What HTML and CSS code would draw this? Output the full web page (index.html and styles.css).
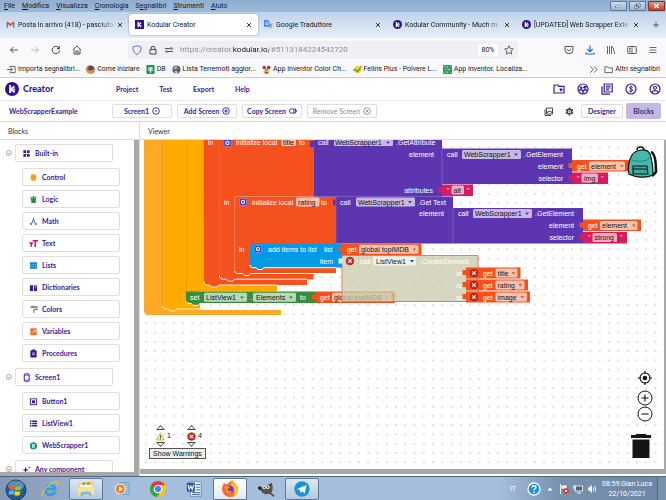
FILE: index.html
```html
<!DOCTYPE html>
<html lang="it">
<head>
<meta charset="utf-8">
<title>Kodular Creator</title>
<link rel="stylesheet" href="styles.css">
</head>
<body>
<svg class="defs" aria-hidden="true">
  <defs>
    <symbol id="kod" viewBox="0 0 14 14"><circle cx="7" cy="7" r="7" fill="#320f91"/><path d="M5.2 3v8M9.4 4.6 6 7.2l3.6 3.2" fill="none" stroke="#fff" stroke-width="1.9"/><circle cx="9.3" cy="7.4" r="1" fill="#fff"/></symbol>
    <symbol id="x" viewBox="0 0 6 6"><path d="m1 1 4 4M5 1 1 5" stroke="#222" stroke-width=".9"/></symbol>
    <symbol id="gear" viewBox="0 0 8 8"><rect x=".4" y=".4" width="7.2" height="7.2" rx="1.6" fill="#2b2fd0" stroke="#c5c0f5" stroke-width=".5"/><circle cx="4" cy="4" r="1.5" fill="none" stroke="#fff" stroke-width="1.1"/><path d="M4 1.4v5.2M1.7 2.7l4.6 2.6M6.3 2.7 1.7 5.3" stroke="#fff" stroke-width=".6"/><circle cx="4" cy="4" r=".9" fill="#2b2fd0"/></symbol>
    <symbol id="err" viewBox="0 0 10 10"><circle cx="5" cy="5" r="4.3" fill="#d3261c" stroke="#7d1a10" stroke-width=".6"/><path d="m3.1 3.1 3.8 3.8m0-3.8L3.1 6.9" stroke="#fff" stroke-width="1.3"/></symbol>
    <pattern id="dots" x="145" y="146.4" width="9.26" height="9.26" patternUnits="userSpaceOnUse"><path d="M0 1h2M1 0v2" stroke="#cfcfcf" stroke-width=".8"/></pattern>
    <pattern id="hatch" width="3" height="3" patternUnits="userSpaceOnUse"><path d="M0 0l3 3M3 0 0 3" stroke="#c8c890" stroke-width=".6"/></pattern>
  </defs>
</svg>

<nav class="menubar">
  <a href="#"><u>F</u>ile</a><a href="#"><u>M</u>odifica</a><a href="#"><u>V</u>isualizza</a><a href="#"><u>C</u>ronologia</a><a href="#">S<u>e</u>gnalibri</a><a href="#"><u>S</u>trumenti</a><a href="#"><u>A</u>iuto</a>
  <div class="winbtns">
    <button aria-label="Riduci"><svg viewBox="0 0 17 9"><rect x="5" y="4.500" width="7" height="2" fill="#fff" stroke="#445" stroke-width=".5"/></svg></button>
    <button aria-label="Ripristina"><svg viewBox="0 0 17 9"><path d="M7.500 2h4v3.500h-4zM5.500 3.700h4V7h-4z" fill="#fff" stroke="#445" stroke-width=".8"/></svg></button>
    <button class="close" aria-label="Chiudi"><svg viewBox="0 0 17 9"><path d="m6 2.200 5 4.600m0-4.600L6 6.800" stroke="#fff" stroke-width="1.700"/></svg></button>
  </div>
</nav>

<div class="tabs">
  <a class="tab" href="#"><svg class="fav" viewBox="0 0 10 10"><path d="M1.500 8.500V3" stroke="#4285f4" stroke-width="1.700"/><path d="M8.500 8.500V3" stroke="#34a853" stroke-width="1.700"/><path d="M1.200 2.400 5 5.400l3.800-3" fill="none" stroke="#ea4335" stroke-width="1.800"/></svg><span class="fade">Posta in arrivo (418) - pasciuto7</span><svg class="tx"><use href="#x"/></svg></a>
  <a class="tab active" href="#"><svg class="fav" viewBox="0 0 10 10"><rect width="10" height="10" fill="#320f91"/><path d="M3.500 2v6M6.800 3 4.300 5l2.600 2.400" fill="none" stroke="#fff" stroke-width="1.500"/></svg><span>Kodular Creator</span><svg class="tx"><use href="#x"/></svg></a>
  <a class="tab" href="#"><svg class="fav" viewBox="0 0 10 10"><path d="M4 3h5.500v7H6z" fill="#c9ccd1"/><path d="M0 0h5l2 7.500H0z" fill="#4285f4"/><path d="M4.600 3.300A1.500 1.500 0 1 0 4.700 4.200H3.200" fill="none" stroke="#fff" stroke-width=".8"/><path d="M6.500 5h2.600M7.500 5 8.600 8" stroke="#607d8b" stroke-width=".7"/></svg><span>Google Traduttore</span><svg class="tx"><use href="#x"/></svg></a>
  <a class="tab" href="#"><svg class="fav"><use href="#kod"/></svg><span class="fade">Kodular Community - Much m</span><svg class="tx"><use href="#x"/></svg></a>
  <a class="tab" href="#"><svg class="fav"><use href="#kod"/></svg><span class="fade">[UPDATED] Web Scrapper Exte</span><svg class="tx"><use href="#x"/></svg></a>
  <button class="newtab" aria-label="Nuova scheda"><svg viewBox="0 0 8 8"><path d="M4 1v6M1 4h6" stroke="#444" stroke-width=".8"/></svg></button>
</div>

<div class="navbar">
  <div class="navgroup">
    <button aria-label="Indietro"><svg viewBox="0 0 10 10"><path d="M9 5H1.500M4.500 2l-3 3 3 3" fill="none" stroke="#444" stroke-width=".9"/></svg></button>
    <button aria-label="Avanti"><svg viewBox="0 0 10 10"><path d="M1 5h7.500M5.500 2l3 3-3 3" fill="none" stroke="#b5b5b9" stroke-width=".9"/></svg></button>
    <button aria-label="Ricarica"><svg viewBox="0 0 10 10"><path d="M8.500 5.500A3.700 3.700 0 1 1 7.500 2.400" fill="none" stroke="#444" stroke-width="1"/><path d="M8.800.800v3.400H5.400z" fill="#444"/></svg></button>
    <button aria-label="Pagina iniziale"><svg viewBox="0 0 10 10"><path d="M1 5 5 1l4 4M2 4.500V9h6V4.500M4 9V6h2v3" fill="none" stroke="#444" stroke-width=".9"/></svg></button>
  </div>
  <div class="urlbar">
    <svg viewBox="0 0 10 10"><path d="M5 .7 9 2c.2 4-1.400 6.200-4 7.500C2.400 8.200.8 6 1 2z" fill="none" stroke="#5b5fc7" stroke-width=".9"/></svg>
    <svg viewBox="0 0 10 10"><path d="M2 4.600h6V9H2zM3.200 4.500V3a1.800 1.800 0 0 1 3.600 0v1.500" fill="none" stroke="#444" stroke-width="1"/></svg>
    <svg viewBox="0 0 10 10"><path d="M1 3.500h5M4 6.500h5M1 6.500h1M8 3.500h1" stroke="#444" stroke-width=".9"/><circle cx="7" cy="3.500" r="1" fill="none" stroke="#444" stroke-width=".7"/><circle cx="3" cy="6.500" r="1" fill="none" stroke="#444" stroke-width=".7"/></svg>
    <input type="text" aria-label="Indirizzo" value="https://creator.kodular.io/#5113184224542720">
    <button class="zoomlevel">80%</button>
    <svg viewBox="0 0 10 10"><path d="m5 .8 1.300 2.800 3 .4-2.200 2.100.6 3L5 7.600 2.300 9.100l.6-3L.7 4l3-.4z" fill="none" stroke="#444" stroke-width=".8"/></svg>
  </div>
  <div class="navtools">
    <button aria-label="Pocket"><svg viewBox="0 0 10 10"><path d="M1 1.500h8V5a4 3.700 0 0 1-8 0z" fill="none" stroke="#444" stroke-width=".9"/><path d="m3 4 2 2 2-2" fill="none" stroke="#444" stroke-width=".9"/></svg></button>
    <button aria-label="Download"><svg viewBox="0 0 10 10"><path d="M5 .5v6M2.200 4 5 6.700 7.800 4M1 7.500V9h8V7.500" fill="none" stroke="#1a73e8" stroke-width="1.200"/></svg></button>
    <button aria-label="Libreria"><svg viewBox="0 0 10 10"><path d="M1.500 1v8M3.500 1v8M5.500 1v8M6.500 1.500 9 9" stroke="#555" stroke-width=".9"/></svg></button>
    <button aria-label="Barra laterale"><svg viewBox="0 0 10 10"><rect x=".7" y="1.500" width="8.600" height="7" rx="1" fill="none" stroke="#444" stroke-width=".9"/><path d="M5 1.500v7M2 3.500h2M2 5h2M2 6.500h2" stroke="#444" stroke-width=".7"/></svg></button>
    <button aria-label="Menu"><svg viewBox="0 0 10 10"><path d="M1.500 2.500h7M1.500 5h7M1.500 7.500h7" stroke="#444" stroke-width=".8"/></svg></button>
  </div>
</div>

<div class="bookmarks">
  <a href="#"><svg viewBox="0 0 10 10"><path d="M3.500 3V1.500H9v7H3.500V7M0 5h6M4.300 3.200 6 5 4.300 6.800" fill="none" stroke="#444" stroke-width=".9"/></svg>Importa segnalibri...</a>
  <a href="#"><svg viewBox="0 0 10 10"><circle cx="5" cy="5" r="4.800" fill="#e8590c"/><circle cx="5.500" cy="4" r="3" fill="#24599c"/><path d="M.5 3C2 7 5 7 9.500 4.500 9 9 3 11 .8 7z" fill="#f79321"/></svg>Come iniziare</a>
  <a href="#"><svg viewBox="0 0 10 10"><rect x=".5" width="9" height="10" rx="1" fill="#0f9d58"/><path d="M2.500 3.500h5M2.500 5.700h5M5 2.500v6" stroke="#fff" stroke-width="1.200"/></svg>DB</a>
  <a href="#"><svg viewBox="0 0 10 10"><circle cx="5" cy="5" r="4.500" fill="#466b8c"/><path d="M2 2.500 5 1l1 3-3 1z" fill="#a9c7a0"/><circle cx="6.500" cy="5.500" r="1.700" fill="#c0392b"/><path d="M3 7h3v2H4z" fill="#dfe6ea"/></svg>Lista Terremoti aggior...</a>
  <a href="#"><svg viewBox="0 0 10 10"><circle cx="2.500" cy="2.700" r="2" fill="#8e3a9d"/><circle cx="7.500" cy="2.700" r="2" fill="#c2272d"/><path d="M2 5h6L7 9H3z" fill="#e6b422"/><circle cx="5" cy="5" r="1.500" fill="#6aa84f"/><path d="M3 8h4v1.500H3z" fill="#b71c50"/></svg>App Inventor Color Ch...</a>
  <a href="#"><svg viewBox="0 0 10 10"><circle cx="5.200" cy="5" r="4" fill="#f5cf1b"/><path d="M0 5.500h3l2 2L9.500 1" fill="none" stroke="#4e9a3a" stroke-width="1.300"/><path d="M5 6.500 9 2" stroke="#e0701c" stroke-width=".7"/></svg>Felins Plus - Polvere L...</a>
  <a href="#"><svg viewBox="0 0 10 10"><rect width="10" height="10" fill="#2c9c57"/><path d="M1 2h2M5 1v2M8 2h1M2 5h1M5 5h3M1 8h2M5 7v2M8 8h1M3 3l1 1" stroke="#b6e3c7" stroke-width=".9"/></svg>App inventor. Localiza...</a>
  <a class="more" href="#" aria-label="Altro"><svg viewBox="0 0 10 10"><path d="m1.500 1.500 3.500 3.500-3.500 3.500M5.500 1.500 9 5 5.500 8.500" fill="none" stroke="#444" stroke-width=".9"/></svg></a>
  <a href="#"><svg viewBox="0 0 10 10"><path d="M1 2h3l1 1.200h4.200V8.500H1z" fill="none" stroke="#444" stroke-width=".9"/></svg>Altri segnalibri</a>
</div>

<header class="apphead">
  <svg class="logo"><use href="#kod"/></svg><strong>Creator</strong>
  <nav><a href="#">Project</a><a href="#">Test</a><a href="#">Export</a><a href="#">Help</a></nav>
  <div class="headicons">
    <button aria-label="Progetti"><svg viewBox="0 0 12 12"><path d="M1 2h4l1 1.300h5V10H1z" fill="none" stroke="#3a189c" stroke-width="1.200"/><path d="m8 4.500.6 1.300 1.400.2-1 1 .2 1.400L8 7.700l-1.200.7L7 7 6 6l1.400-.2z" fill="#3a189c"/></svg></button>
    <button aria-label="Community"><svg viewBox="0 0 12 12"><circle cx="6" cy="6" r="5" fill="none" stroke="#3a189c" stroke-width="1.200"/><circle cx="4.200" cy="4.800" r="1.300" fill="#3a189c"/><circle cx="7.800" cy="4.200" r="1.500" fill="#3a189c"/><path d="M1.500 7.500C3 6.500 5 6.500 6 8c1-1.400 3-1.500 4.500-.5M6 8v3" fill="none" stroke="#3a189c" stroke-width="1.400"/></svg></button>
    <button aria-label="Documentazione"><svg viewBox="0 0 12 12"><path d="M3.200 1h8v8h-8zM1 3.200V11.200h8M5 3.200h4.500M5 5h4.500M5 6.800h3" fill="none" stroke="#3a189c" stroke-width="1.200"/></svg></button>
    <button aria-label="Guadagni"><svg viewBox="0 0 12 12"><circle cx="6" cy="6" r="5" fill="none" stroke="#3a189c" stroke-width="1.200"/><path d="M7.700 4.400C7 3.200 4.500 3.400 4.500 4.700S7.700 5.800 7.700 7.200 5 8.800 4.200 7.500M6 2.500v7" fill="none" stroke="#3a189c" stroke-width="1"/></svg></button>
    <button aria-label="Profilo"><svg viewBox="0 0 12 12"><circle cx="6" cy="6" r="5" fill="none" stroke="#3a189c" stroke-width="1.200"/><circle cx="6" cy="4.700" r="1.500" fill="none" stroke="#3a189c" stroke-width="1.100"/><path d="M2.800 9.200c1.500-2 5-2 6.400 0" fill="none" stroke="#3a189c" stroke-width="1.200"/></svg></button>
  </div>
</header>

<div class="toolbar">
  <h1>WebScrapperExample</h1>
  <button class="btn">Screen1<svg viewBox="0 0 8 8"><circle cx="4" cy="4" r="3.300" fill="none" stroke="#3a189c" stroke-width=".9"/><path d="M2.700 3.500h2.600L4 5z" fill="#3a189c"/></svg></button>
  <button class="btn">Add Screen<svg viewBox="0 0 8 8"><circle cx="4" cy="4" r="3.300" fill="none" stroke="#3a189c" stroke-width=".9"/><path d="M4 2.300v3.400M2.300 4h3.400" stroke="#3a189c" stroke-width="1"/></svg></button>
  <button class="btn">Copy Screen<svg viewBox="0 0 8 8"><circle cx="2.800" cy="4" r="2.300" fill="none" stroke="#3a189c" stroke-width=".9"/><path d="M4.500 1.700a2.300 2.300 0 0 1 0 4.600M6 1.900a2.300 2.300 0 0 1 0 4.200" fill="none" stroke="#3a189c" stroke-width=".9"/></svg></button>
  <button class="btn disabled" disabled>Remove Screen<svg viewBox="0 0 8 8"><circle cx="4" cy="4" r="3.300" fill="none" stroke="#888" stroke-width=".8"/><path d="m2.700 2.700 2.600 2.600m0-2.600L2.700 5.300" stroke="#888" stroke-width=".8"/></svg></button>
  <div class="right">
    <div class="icons">
      <button aria-label="Risorse"><svg viewBox="0 0 9 9"><path d="M2.500 1h6v6h-6zM1 2.500v6h6M3 6l1.500-2 1 1L6.500 3.700 8 6" fill="none" stroke="#333" stroke-width=".9"/></svg></button>
      <button aria-label="Impostazioni"><svg viewBox="0 0 9 9"><circle cx="4.500" cy="4.500" r="2.300" fill="none" stroke="#444" stroke-width="1.400"/><path d="M4.500.5v1.500M4.500 7v1.500M1 2.500l1.300.7M8 2.500l-1.300.7M1 6.500l1.300-.7M8 6.500l-1.300-.7" stroke="#444" stroke-width="1.600"/><circle cx="4.500" cy="4.500" r=".7" fill="#444"/></svg></button>
    </div>
    <button class="btn view">Designer</button>
    <button class="btn view current">Blocks</button>
  </div>
</div>

<main>
  <section class="side">
    <h2>Blocks</h2>
    <div class="tree">
      <div class="group"><i class="tog"></i><button class="node"><svg viewBox="0 0 10 10"><path d="M1.500 1.500h3v3h-3zM5.500 1.500h3v3h-3zM1.500 5.500h3v3h-3zM5.500 5.500h3v3h-3z" fill="#3a189c"/></svg>Built-in</button></div>
      <div class="kids">
        <button class="node"><svg viewBox="0 0 10 10"><rect x="2" y="1" width="6" height="8" rx="2.500" fill="#ffa726"/><path d="M2 4h6M2 6h6" stroke="#c98a20" stroke-width=".6"/></svg>Control</button>
        <button class="node"><svg viewBox="0 0 10 10"><path d="M1.500 1 4 4V1h2v3l2.500-3L7.500 6v3h-5V6z" fill="#2e8b3e"/></svg>Logic</button>
        <button class="node"><svg viewBox="0 0 10 10"><path d="M5 1v1.500M5 2.500 2.300 9M5 2.500 7.700 9M1 7.500h1.500M8 7.500h1" stroke="#3f51a5" stroke-width="1.100"/></svg>Math</button>
        <button class="node"><svg viewBox="0 0 10 10"><path d="M4 2h6M7 2v7M.5 4.500h4M2.500 3.500v5" stroke="#c2185b" stroke-width="1.700"/></svg>Text</button>
        <button class="node"><svg viewBox="0 0 10 10"><path d="M1 2.500h8M1 5h8M1 7.500h8" stroke="#0d8bd0" stroke-width="2"/></svg>Lists</button>
        <button class="node"><svg viewBox="0 0 10 10"><path d="M1 2.500h3.500V9H1zM5.500 2.500H9V9H5.500z" fill="#3a189c"/><path d="M7.500 1v5" stroke="#fff" stroke-width=".7"/></svg>Dictionaries</button>
        <button class="node"><svg viewBox="0 0 10 10"><path d="M2 1h6v2.500H2z" fill="#888"/><path d="M8 2h1v3H5.500v4" fill="none" stroke="#777" stroke-width="1.200"/></svg>Colors</button>
        <button class="node"><svg viewBox="0 0 10 10"><rect x="1.500" y="1.500" width="7" height="7.500" fill="#f4671e"/><path d="m3.500 7 3-3M5 3.700h2v2" fill="none" stroke="#fff" stroke-width=".8"/></svg>Variables</button>
        <button class="node"><svg viewBox="0 0 10 10"><rect x="1.500" y="1.500" width="7" height="8" rx="1" fill="#3a189c"/><rect x="3.500" y=".5" width="3" height="2" fill="#3a189c"/><path d="M3.500 4.500h3M3.500 6.200h3" stroke="#fff" stroke-width=".8"/></svg>Procedures</button>
      </div>
      <div class="group"><i class="tog"></i><button class="node"><svg viewBox="0 0 10 10"><rect x="2.500" y="1" width="5.500" height="8.200" rx="1" fill="none" stroke="#3a189c" stroke-width="1.100"/><path d="M2.500 2.500H8M2.500 7.800H8" stroke="#3a189c" stroke-width=".7"/></svg>Screen1</button></div>
      <div class="kids">
        <button class="node"><svg viewBox="0 0 10 10"><rect x="1.500" y="2" width="7" height="6.500" fill="none" stroke="#3a189c"/><rect x="3.200" y="3.700" width="3.600" height="3.200" fill="#3a189c"/></svg>Button1</button>
        <button class="node"><svg viewBox="0 0 10 10"><path d="M3.500 2.500H9M3.500 5H9M3.500 7.500H9M1 2.500h1.700M1 5h1.700M1 7.500h1.700" stroke="#3a189c" stroke-width="1.500"/></svg>ListView1</button>
        <button class="node"><svg viewBox="0 0 10 10"><circle cx="5" cy="5.500" r="4" fill="#159a67"/><path d="M3.900 8V3.700h1.500a1 1 0 0 1 0 2H4M5 5.700 6.500 8" fill="none" stroke="#fff" stroke-width=".9"/></svg>WebScrapper1</button>
      </div>
      <div class="group"><i class="tog"></i><button class="node"><svg viewBox="0 0 10 10"><path d="m4 2 .9 2.600 2.600.9-2.600.9L4 9l-.9-2.600L.5 5.500l2.600-.9zM8 1l.4 1.100 1.100.4-1.100.4L8 4l-.4-1.100-1.100-.4 1.100-.4zM8 7l.4 1.100 1.100.4-1.100.4L8 10l-.4-1.100-1.100-.4 1.100-.4z" fill="#3a189c"/></svg>Any component</button></div>
    </div>
  </section>
  <section class="viewer">
    <h2>Viewer</h2>
    <div class="canvas">
      <svg class="blocks" aria-label="Blocks workspace">
        <g transform="translate(-140 -140)">
          <rect x="144" y="140" width="2000" height="2000" fill="url(#dots)"/>
          <path d="M144 140H281V315H147L144 312z" fill="#ffa726"/>
          <path d="M200 287H900V310H200z" fill="#fff"/><path d="M200 287H900V310H200z" fill="url(#dots)"/>
          <path d="M162 140H277V291.500H200V309.500H177l-2 2h-5l-2-2h-4l-2-2z" fill="#ffab00"/>
          <path d="M162.500 140V307" stroke="#e5992a" stroke-width=".7"/>
          <path d="M162.500 306v1l2 2h4l2 2h4l2-2H200" fill="none" stroke="#fff1c9" stroke-width="1"/>
          <path d="M277 140H900V310H277z" fill="#fff"/><path d="M277 140H900V310H277z" fill="url(#dots)"/>
          <path d="M186.500 140V291" stroke="#e39a0c" stroke-width=".6"/>
          <path d="M203.700 140H314V280.500H307V285H219l-2 2h-5l-2-2h-4l-2-2z" fill="#f4511e"/>
          <path d="M204 281v2l2 2h4l2 2h5l2-2h58" fill="none" stroke="#fff" stroke-width=".9"/>
          <path d="M307 279.500H316V286.500H307z" fill="#fff"/>
          <path d="M313.500 267H345V280H313.500z" fill="#fff"/><path d="M313.500 267H345V280H313.500z" fill="url(#dots)"/>
          <path d="M219.500 140V276" stroke="#e0684a" stroke-width="1"/>
          <path d="M219.500 275v2l2 2.200h5l2 2h4l2-2H307" fill="none" stroke="#fff" stroke-width="1"/>
          <path d="M234.700 198l2-1.500H336V273H236z" fill="#f4511e"/>
          <path d="M234.700 271v1l2 1.500h6l2 2h4l2-2H313.500" fill="none" stroke="#fff" stroke-width="1"/>
          <path d="M234.700 271V198l2-1.500H314" fill="none" stroke="#f59a7c" stroke-width=".7"/>
          <path d="M250 245.500l2-2H342V267.500H264l-2 2h-5l-2-2h-3l-2-2z" fill="#039be5"/>
          <path d="M250 265v1l2 1.700h4l2 1.800h4l2-1.800H336" fill="none" stroke="#fff" stroke-width="1"/>
          <g fill="#5e35b1"><path d="M314 140H442V196.500H314zM310 141h4v6h-4zM336 196.500H453V243.500H336zM333 199.500h3v6h-3zM442 148.500H572V184H442zM453 208H583V243.500H453z"/></g>
          <path d="M314 196.500H442M442 148.500V184M453 208V243.500M336 197V243" fill="none" stroke="#8562c6" stroke-width=".8"/>
          <g fill="#d81b60"><path d="M442 184.500H473V196H442zM438.500 187h4v5h-4zM572 172.500H608V184H572zM568.500 175h4v5h-4zM583 232H627V243.500H583zM579.500 234.500h4v5h-4z"/></g>
          <g fill="#f4511e"><path d="M572 160H634V171.500H572zM568.500 163h4v5h-4zM583 219.500H641V231H583zM579.500 222.500h4v5h-4zM342 243.500H421.500V255H342zM338.500 246.500h4v5h-4z"/></g>
          <path d="M186 291.500H316V303H200l-2 2h-5l-2-2h-3l-2-2z" fill="#388e3c"/>
          <path d="M186 301l2 2.300h3l2 2h5l2-2" fill="none" stroke="#fff" stroke-width=".8"/>
          <path d="M316 291.500H395V303H316zM312 294.500h4v5h-4z" fill="#f4511e"/>

          <g fill="#fff" fill-opacity=".65">
            <rect x="281.500" y="137" width="14.500" height="9" rx="1.500"/><rect x="334" y="137" width="59" height="9" rx="1.500"/>
            <rect x="462" y="150" width="59" height="9" rx="1.500"/><rect x="589" y="161.500" width="36" height="9" rx="1.500"/>
            <rect x="581.500" y="173.500" width="16.500" height="9" rx="1.500"/><rect x="451.500" y="185.500" width="12.500" height="9" rx="1.500"/>
            <rect x="296" y="197.500" width="23.500" height="9" rx="1.500"/><rect x="356" y="197.500" width="59" height="9" rx="1.500"/>
            <rect x="473" y="209" width="59" height="9" rx="1.500"/><rect x="600" y="221" width="37.500" height="9" rx="1.500"/>
            <rect x="592.500" y="233" width="24.500" height="9" rx="1.500"/><rect x="359" y="244.700" width="59.500" height="9" rx="1.500"/>
            <rect x="204" y="292.700" width="43" height="9" rx="1.500"/><rect x="253" y="292.700" width="43" height="9" rx="1.500"/>
            <rect x="332" y="292.700" width="59.500" height="9" rx="1.500"/>
          </g>
          <g class="field">
            <text x="283" y="145">title</text><text x="335" y="145">WebScrapper1</text><text x="464" y="157">WebScrapper1</text>
            <text x="591" y="169">element</text><text x="584" y="180.500">img</text><text x="453.500" y="192.500">alt</text>
            <text x="298" y="204.500">rating</text><text x="358" y="204.500">WebScrapper1</text><text x="475" y="216">WebScrapper1</text>
            <text x="602" y="228">element</text><text x="594.500" y="240">strong</text><text x="361" y="252">global topIMDB</text>
            <text x="206" y="299.700">ListView1</text><text x="256" y="299.700">Elements</text><text x="334" y="299.700">global topIMDB</text>
          </g>
          <path d="M386 141.500h4l-2 2.500zM514 153.500h4l-2 2.500zM408 201h4l-2 2.500zM525 212.500h4l-2 2.500z" fill="#5e35b1"/>
          <path d="M620 165h3.500l-1.700 2.500zM632 224.500h3.500l-1.700 2.500zM412.500 248.500h3.500l-1.700 2.500zM385 296.500h3.500l-1.700 2.500z" fill="#f4511e"/>
          <path d="M240 296.500h4l-2 2.500zM289 296.500h4l-2 2.500z" fill="#388e3c"/>
          <g class="lab">
            <text x="208" y="145">in</text><text x="236" y="145">initialize local</text><text x="299" y="145">to</text><text x="318" y="145">call</text><text x="396" y="145">.GetAttribute</text>
            <text x="224" y="204.500">in</text><text x="252" y="204.500">initialize local</text><text x="321" y="204.500">to</text><text x="340" y="204.500">call</text><text x="418" y="204.500">.Get Text</text>
            <text x="447" y="157">call</text><text x="524" y="157">.GetElement</text><text x="577" y="169">get</text>
            <text x="458" y="216">call</text><text x="535" y="216">.GetElement</text><text x="588" y="228">get</text>
            <text x="239" y="252">in</text><text x="268" y="252">add items to list</text><text x="324" y="252">list</text><text x="347" y="252">get</text>
            <text x="190" y="299.700">set</text><text x="250" y="299.700">.</text><text x="300" y="299.700">to</text><text x="320" y="299.700">get</text>
            <text x="577" y="180.500">"</text><text x="601" y="180.500">"</text><text x="447" y="192.500">"</text><text x="467" y="192.500">"</text><text x="588" y="240">"</text><text x="620" y="240">"</text>
            <g text-anchor="end"><text x="434" y="157">element</text><text x="433" y="192.500">attributes</text><text x="563" y="169">element</text><text x="563" y="180.500">selector</text><text x="444" y="216">element</text><text x="574" y="228">element</text><text x="574" y="240">selector</text><text x="333" y="263.500">item</text></g>
          </g>
          <use href="#gear" x="223.500" y="139" width="8" height="8"/><use href="#gear" x="239" y="198" width="8" height="8"/><use href="#gear" x="254" y="245" width="8" height="8"/>

          <path d="M342 255.500H478V301.500H342z" fill="#cbccb6" fill-opacity=".72" stroke="#f0624a" stroke-width=".9"/>
          <path d="M342 255.500H478V301.500H342z" fill="url(#hatch)" fill-opacity=".5"/>
          <path d="M338.500 258.500h4v5h-4z" fill="#eee"/>
          <use href="#err" x="345.500" y="256.500" width="9" height="9"/>
          <rect x="373" y="256.500" width="43" height="9" rx="1.500" fill="#fff" fill-opacity=".65"/>
          <text class="ink" x="376" y="263.500">ListView1</text><path d="M410 260h4l-2 2.500z" fill="#333399"/>
          <g class="ghost"><text x="360" y="263.500">call</text><text x="420" y="263.500">.CreateElement</text><text x="456" y="275.500">ar</text><text x="456" y="287.500">ar</text><text x="456" y="299.500">ar</text></g>
          <path d="M466 267.500H520.500V278.500H466zM466 279.500H528V290.500H466zM466 291.500H530V302.500H466zM462.500 270h4v5h-4zM462.500 282h4v5h-4zM462.500 294h4v5h-4z" fill="#f4511e"/>
          <use href="#err" x="469.500" y="268.500" width="9" height="9"/><use href="#err" x="469.500" y="280.500" width="9" height="9"/><use href="#err" x="469.500" y="292.500" width="9" height="9"/>
          <g fill="#fff" fill-opacity=".65"><rect x="495.500" y="268.500" width="22" height="9" rx="1.500"/><rect x="495.500" y="280.500" width="29" height="9" rx="1.500"/><rect x="495.500" y="292.500" width="31.500" height="9" rx="1.500"/></g>
          <g class="lab"><text x="483" y="275.500">get</text><text x="483" y="287.500">get</text><text x="483" y="299.500">get</text></g>
          <g class="ink"><text x="497.500" y="275.500">title</text><text x="497.500" y="287.500">rating</text><text x="497.500" y="299.500">image</text></g>
          <path d="M511.500 272h3.500l-1.700 2.500zM518.500 284h3.500l-1.700 2.500zM520.500 296h3.500l-1.700 2.500z" fill="#f4511e"/>
        </g>
      </svg>

      <svg class="backpack" viewBox="0 0 32 34"><path d="M25 6c3 1 5 8 5 20l-4 4" fill="none" stroke="#111" stroke-width="2.500"/><path d="M11 4c0-4 7-4 7 0" fill="none" stroke="#111" stroke-width="1.500"/><path d="M6 9C10 3 21 2 24 8c2 6 3 14 3 21-6 3-17 3-24-1C1 22 3 14 6 9z" fill="#45b8ac" stroke="#111" stroke-width="1.200"/><path d="M6 14c6 2 13 2 18-2" fill="none" stroke="#1d6e68" stroke-width=".7"/><path d="M7 20h14l1 8H7z" fill="#3aa99e" stroke="#111" stroke-width="1.100"/><path d="M7 23h14" stroke="#111" stroke-width="1"/></svg>

      <div class="warn">
        <div class="counts">
          <div><i class="up"></i><span><svg viewBox="0 0 10 10"><path d="M5 .8 9.500 9H.5z" fill="#f7e88c" stroke="#a99a3c" stroke-width=".7"/><path d="M5 3.500v3M5 7.200v1" stroke="#333" stroke-width=".9"/></svg>1</span><i class="down"></i></div>
          <div><i class="up"></i><span><svg><use href="#err"/></svg>4</span><i class="down"></i></div>
        </div>
        <button>Show Warnings</button>
      </div>

      <div class="controls">
        <svg viewBox="0 0 16 16"><circle cx="8" cy="8" r="5" fill="#fff" stroke="#111" stroke-width="1.100"/><circle cx="8" cy="8" r="2.300" fill="#111"/><path d="M8 1v3M8 12v3M1 8h3M12 8h3" stroke="#111" stroke-width="1.200"/></svg>
        <svg viewBox="0 0 16 16"><circle cx="8" cy="8" r="7" fill="#fff" stroke="#111" stroke-width="1"/><path d="M8 4.500v7M4.500 8h7" stroke="#111" stroke-width="1.100"/></svg>
        <svg viewBox="0 0 16 16"><circle cx="8" cy="8" r="7" fill="#fff" stroke="#111" stroke-width="1"/><path d="M4.500 8h7" stroke="#111" stroke-width="1.100"/></svg>
        <svg class="trash" viewBox="0 0 20 26"><path d="M0 2h5V1h10v1h5v3H0zM1.500 6.500h17V25h-17z" fill="#151515"/></svg>
      </div>
    </div>
  </section>
</main>

<footer class="taskbar">
  <button class="start" aria-label="Start"><svg viewBox="0 0 22 22"><circle cx="11" cy="11" r="10" fill="#245a8e" stroke="#16385c"/><ellipse cx="11" cy="6.500" rx="8" ry="5" fill="#7fb0d8" opacity=".6"/><path d="M5 7c2-1.500 3.500-1 5-.3l-.8 4C8 10 6 10 4.500 11z" fill="#f1592a"/><path d="M11 7c2 1 3.500.8 5.500-.2l-.9 4c-2 1-3.500 1-5.400.2z" fill="#8cc63f"/><path d="M4.200 12c2-1 3.500-.8 5-.2l-.8 4c-1.500-.8-3-.8-5 .2z" fill="#4cb5f5"/><path d="M10 12c2 1 3.500 1 5.500 0l-.9 4c-2 1-3.500 1-5.400 0z" fill="#fcd116"/></svg></button>
  <button aria-label="Internet Explorer"><svg viewBox="0 0 20 20"><path d="M15.500 13A5.500 5.500 0 1 1 15.800 10H6" fill="none" stroke="#2b9fe4" stroke-width="2.800"/><path d="M2 18C-1 14 10 2 18 2c2 .5 1 3 0 4" fill="none" stroke="#f2c230" stroke-width="1.300"/></svg></button>
  <button class="open" aria-label="Esplora file"><svg viewBox="0 0 20 20"><path d="M1.500 4h5l1-2h10l1 14h-17z" fill="#e9cc72"/><path d="M3 5h14v3H3z" fill="#fff6d5"/><path d="M6 3h3v2H6z" fill="#35a04d"/><path d="M11 3h3v2h-3z" fill="#d8532e"/><path d="M1 8h18l-.5 9h-17z" fill="#f6e09b"/><path d="M4 18v-3c0-3 12-3 12 0v3h-2.500v-2h-7v2z" fill="#7bb9e5"/></svg></button>
  <button aria-label="Media Player"><svg viewBox="0 0 20 20"><rect x="7" y="3" width="11" height="13" rx="1" fill="#8fc1e3" stroke="#5a93bd" stroke-width=".7"/><circle cx="8" cy="10" r="5.500" fill="#f57c1f" stroke="#fff"/><path d="M6.500 7 11 10l-4.500 3z" fill="#fff"/></svg></button>
  <button aria-label="Chrome"><svg viewBox="0 0 20 20"><circle cx="10" cy="10" r="9" fill="#fbc116"/><path d="M10 10 2.200 5.500A9 9 0 0 0 9 19l3-5z" fill="#2da94f"/><path d="M2.200 5.500a9 9 0 0 1 15.600 0H10L6 10z" fill="#e33b2e"/><circle cx="10" cy="10" r="4.200" fill="#4285f4" stroke="#fff" stroke-width="1.200"/></svg></button>
  <button aria-label="Word"><svg viewBox="0 0 20 20"><path d="M6 2h12v16H6z" fill="#f5f8fc" stroke="#4a76b8" stroke-width=".8"/><path d="M12 5h5M12 8h5M12 11h5M8 14h9M8 16h9" stroke="#2b579a" stroke-width="1"/><path d="M2 3h9v10H2z" fill="#2b579a"/><path d="m3.500 5.500 1.200 5 1.800-4 1.500 4 1.500-5" fill="none" stroke="#fff" stroke-width="1.200"/></svg></button>
  <button class="open bright" aria-label="Firefox"><svg viewBox="0 0 20 20"><path d="M10 19A9 9 0 0 1 2 6l1.500-3L5 5l3-1c1-2 3-3 5-4 0 3 6 5 6 10.500A9 9 0 0 1 10 19z" fill="#ff6a2b"/><path d="M13 0c0 3 6 5 6 10.500A8 8 0 0 1 14 18c2-6 0-9-3-11 0-3 0-5 2-7z" fill="#ffbd2e"/><circle cx="10" cy="10.500" r="4.200" fill="#6f3fc4"/><path d="M4 7c3-1 5 0 6 2l-3 1c1 3 4 3 6 2-2 5-9 3-9-5z" fill="#ff9125"/></svg></button>
  <button aria-label="GIMP"><svg viewBox="0 0 20 20"><path d="M2 9c3-1 5 0 8-2l6-4c2 3 2 8 0 11-4 3-9 2-11-1z" fill="#5b5148"/><circle cx="3" cy="9" r="2" fill="#222"/><circle cx="8" cy="8.500" r="1.700" fill="#fff"/><circle cx="12" cy="8" r="2" fill="#fff"/><circle cx="8" cy="8.500" r=".8"/><circle cx="12" cy="8" r=".8"/><path d="m14 14 5 4" stroke="#4a4039" stroke-width="1.500"/></svg></button>
  <button class="open" aria-label="Telegram"><svg viewBox="0 0 20 20"><circle cx="10" cy="10" r="8.500" fill="#1c93d8"/><path d="m4.500 10 10.500-4.500-2 9.500-3.200-2.400-1.800 1.800V11.500z" fill="#fff"/></svg></button>
  <div class="tray">
    <span class="lang">IT</span>
    <svg class="help" viewBox="0 0 14 14"><circle cx="7" cy="7" r="6" fill="#1b93dd" stroke="#fff" stroke-width="1.300"/><path d="M5.200 5.500C5.200 3 9 3.200 8.900 5.400 8.800 6.800 7 6.800 7 8.500M7 9.500V11" fill="none" stroke="#fff" stroke-width="1.400"/></svg>
    <svg viewBox="0 0 10 10"><path d="m2.500 6.500 2.500-3 2.500 3z" fill="#fff"/></svg>
    <svg viewBox="0 0 10 10"><path d="M1.500 0v10" stroke="#fff" stroke-width="1"/><path d="M2 1h6v4H2z" fill="#eee" stroke="#555" stroke-width=".4"/><circle cx="7" cy="7" r="2.800" fill="#d9362b"/><path d="m5.900 5.900 2.200 2.200m0-2.200L5.900 8.100" stroke="#fff" stroke-width=".8"/></svg>
    <svg viewBox="0 0 10 10"><rect x="2.500" y="2" width="7" height="5" fill="#567" stroke="#fff" stroke-width=".8"/><path d="M4 9h4M1 1v5M0 3h2" stroke="#fff" stroke-width=".9"/></svg>
    <svg viewBox="0 0 10 10"><path d="M1 3.500h1.500L5 1v8L2.500 6.500H1z" fill="#fff"/><path d="M6.300 3.300q1 1.700 0 3.400M7.800 2q1.900 3 0 6" fill="none" stroke="#fff" stroke-width=".8"/></svg>
    <div class="clock">08:59:Gian Luca<br>22/10/2021</div>
    <button class="peek" aria-label="Mostra desktop"></button>
  </div>
</footer>
</body>
</html>
```
FILE: styles.css
```css
* { box-sizing: border-box; }
body {
  margin: 0;
  height: 100vh;
  display: flex;
  flex-direction: column;
  overflow: hidden;
  background: #fff;
  font-family: Roboto, "Open Sans", sans-serif;
  font-size: 7px;
  line-height: 10px;
  color: #16161a;
}
button, input { font: inherit; color: inherit; margin: 0; padding: 0; border: 0; background: none; }
a { color: inherit; text-decoration: none; }
svg { display: block; flex: none; }
h1, h2 { margin: 0; font-weight: 400; }
.defs { position: absolute; width: 0; height: 0; }

.menubar { display: flex; align-items: center; gap: 7px; height: 12px; padding-left: 4px; background: linear-gradient(#8fadd0, #9bb9da); }
.winbtns { display: flex; gap: 2px; margin: 0 1px 0 auto; }
.winbtns button { height: 10px; border: 1px solid #5f7896; border-radius: 1px; background: linear-gradient(#cbdcee, #9ab4d0); }
.winbtns svg { width: 15px; height: 8px; }
.winbtns .close { background: linear-gradient(#e39a85, #c43e22); border-color: #7d3427; }

.tabs { display: flex; align-items: center; height: 26px; padding: 0 6px 1px 0; background: linear-gradient(#bfd3ea, #e6eef8); }
.tab { display: flex; align-items: center; flex: 0 1 129px; min-width: 0; height: 21px; gap: 3px; padding: 0 6px; }
.tab span { flex: 1; white-space: nowrap; }
.tab .fade { width: 0; mask-image: linear-gradient(90deg, #000 85%, rgba(0, 0, 0, .2)); }
.tab.active { background: #fff; border-radius: 3px; box-shadow: 0 0 2px #6f87a8; }
.fav { width: 9px; height: 9px; }
.tx { width: 6px; height: 6px; }
.newtab { margin-left: auto; }
.newtab svg { width: 8px; height: 8px; }

.navbar { display: flex; align-items: center; height: 23px; background: #f9f9fb; padding: 0 8px 0 9px; }
.navbar svg { width: 10px; height: 10px; }
.navgroup { display: flex; gap: 11px; width: 119px; }
.urlbar { display: flex; align-items: center; gap: 6px; flex: 0 1 390px; height: 18px; padding: 0 4px; border-radius: 2px; background: #f0f0f4; }
.urlbar input {
  flex: 1; min-width: 0; height: 12px; font-size: 8px; color: transparent;
  background: linear-gradient(90deg, #85858b 52px, #16161a 52px, #16161a 89px, #85858b 89px);
  background-clip: text;
  -webkit-background-clip: text;
}
.zoomlevel { width: 20px; height: 12px; border-radius: 2px; background: #fff; }
.navtools { display: flex; gap: 11px; margin-left: auto; }

.bookmarks { display: flex; align-items: center; gap: 6px; height: 17px; padding: 0 6px 0 7px; background: #f9f9fb; border-bottom: 1px solid #ccc; white-space: nowrap; }
.bookmarks a { display: flex; align-items: center; gap: 2px; }
.bookmarks svg { width: 9px; height: 9px; }
.bookmarks .more { margin-left: auto; }

.apphead, .toolbar, main { font-family: Lato, "Open Sans", sans-serif; font-weight: 700; font-size: 7px; color: #3a189c; }
.apphead { display: flex; align-items: center; height: 23px; padding: 0 5px; border-bottom: 1px solid #e8e8ec; }
.logo { width: 14px; height: 14px; margin-right: 4px; }
.apphead strong { width: 93px; font-size: 9px; }
.apphead nav { display: flex; gap: 21px; }
.headicons { display: flex; gap: 12px; margin-left: auto; }
.headicons svg { width: 12px; height: 12px; }

.toolbar { display: flex; align-items: center; height: 21px; gap: 5px; padding: 0 5px 0 9px; border-bottom: 1px solid #d5d0ec; }
.toolbar h1 { width: 98px; font-size: 7px; font-weight: 700; }
.btn { display: flex; align-items: center; justify-content: center; gap: 3px; width: 60px; height: 14px; border: 1px solid #dcdce2; border-radius: 2px; white-space: nowrap; }
.btn svg { width: 8px; height: 8px; }
.btn.disabled { width: 70px; color: #8c8c8c; font-weight: 400; }
.right { display: flex; align-items: center; gap: 3px; margin-left: auto; }
.icons { display: flex; gap: 12px; margin-right: 4px; }
.icons svg { width: 9px; height: 9px; }
.btn.view { width: 42px; }
.btn.current { width: 35px; height: 16px; border-color: #c5b8e6; background: #c5b8e6; color: #3c3360; }

main { flex: 1; min-height: 0; display: flex; }
h2 { height: 18px; padding: 4px 8px; color: #333; font-size: 7px; border-bottom: 1px solid #ddd; }
.side { width: 140px; display: flex; flex-direction: column; min-height: 0; border-right: 1px solid #ddd; }
.tree { flex: 1; min-height: 0; overflow: hidden; padding: 4px 0 0 6px; border-right: 5px solid #a8a8a8; border-bottom: 4px solid #a8a8a8; display: flex; flex-direction: column; gap: 6px; }
.group { display: flex; align-items: center; gap: 3px; }
.tog { width: 6px; height: 6px; border: 1px solid #aaa; border-radius: 3px; background: linear-gradient(#aaa, #aaa) center / 2px 1px no-repeat; }
.kids { display: flex; flex-direction: column; gap: 4px; padding-left: 16px; }
.node { display: flex; align-items: center; gap: 4px; width: 98px; height: 18px; padding: 0 6px; border: 1px solid #dedee2; border-radius: 2px; flex: none; }
.node svg { width: 9px; height: 9px; }

.viewer { flex: 1; min-width: 0; display: flex; flex-direction: column; }
.canvas { position: relative; flex: 1; min-height: 0; overflow: hidden; border-bottom: 5px solid #a8a8a8; border-right: 2px solid #a8a8a8; margin-bottom: 2px; }
.blocks { position: absolute; inset: 0; width: 100%; height: 100%; font-family: "Liberation Sans", Arial, sans-serif; font-size: 7px; font-weight: 400; }
.lab { fill: #fff; }
.field, .ink { fill: #111; }
.ghost { fill: #fff; }
.backpack { position: absolute; top: 6px; right: 6px; width: 32px; height: 34px; }
.warn { position: absolute; left: 9px; bottom: 10px; font-family: "Liberation Sans", Arial, sans-serif; font-weight: 400; color: #111; }
.counts { display: flex; gap: 13px; padding-left: 7px; }
.counts div { display: flex; flex-direction: column; gap: 1px; width: 18px; }
.counts span { display: flex; align-items: center; gap: 2px; }
.counts svg { width: 9px; height: 9px; }
.up, .down { width: 9px; height: 5px; background: #444; clip-path: polygon(50% 0, 100% 100%, 0 100%, 50% 0, 50% 25%, 20% 80%, 80% 80%, 50% 25%); }
.down { transform: rotate(180deg); }
.warn button { display: block; width: 57px; height: 11px; border: 1px solid #555; background: #eee; margin-top: 1px; }
.controls { position: absolute; right: 5px; bottom: 10px; display: flex; flex-direction: column; align-items: center; }
.controls svg { width: 16px; height: 16px; }
.controls svg:first-child { margin-bottom: 4px; }
.controls .trash { width: 20px; height: 26px; margin: 11px 8px 0 0; }

.taskbar { display: flex; align-items: center; gap: 2px; height: 24px; border-top: 1px solid #4f6480; background: linear-gradient(90deg, #8496b4, #a5bedc 18%, #a5bedc 75%, #7891b0 84%, #6d86a5); color: #fff; }
.taskbar > button { display: grid; place-items: center; width: 34px; height: 22px; border: 1px solid transparent; border-radius: 2px; }
.taskbar > button svg { width: 18px; height: 18px; }
.taskbar > .start { width: 31px; }
.taskbar > .start svg { width: 22px; height: 22px; }
.taskbar > .open { border-color: #5f7895; background: linear-gradient(#dce8f4, #b3c9e0); }
.taskbar > .bright { background: linear-gradient(#fff, #dfe9f3); }
.tray { display: flex; align-items: center; gap: 4px; margin-left: auto; height: 100%; }
.tray svg { width: 10px; height: 10px; }
.tray .help { width: 14px; height: 14px; }
.lang { margin-right: 7px; }
.clock { width: 52px; text-align: center; white-space: nowrap; }
.peek { width: 9px; height: 100%; border-left: 1px solid #4d6482; background: #7a91ae; }
```
